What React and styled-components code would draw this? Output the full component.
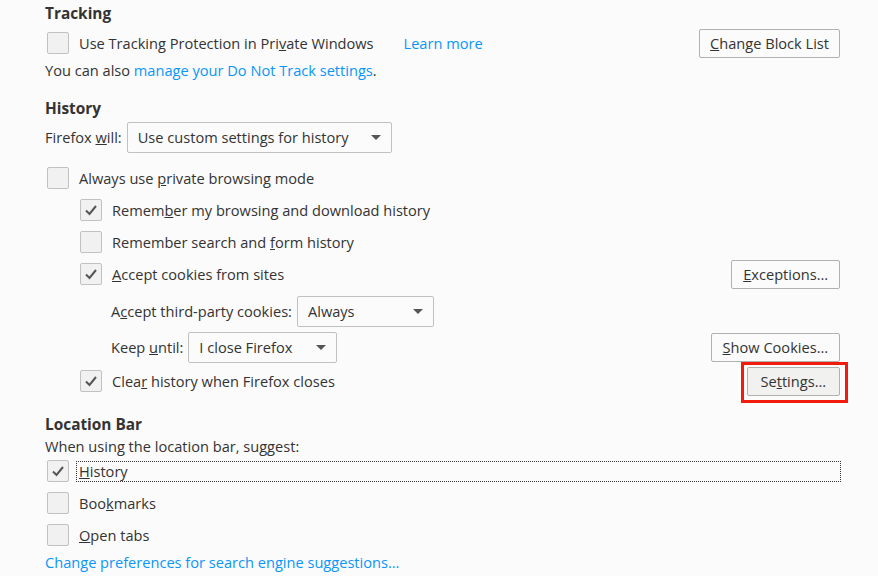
import styled, { createGlobalStyle } from "styled-components";

const GlobalStyle = createGlobalStyle`
  html, body {
    margin: 0;
    padding: 0;
    background: #fbfbfb;
  }
  body {
    font-family: "Open Sans", "Liberation Sans", sans-serif;
    font-size: 14.6px;
    color: #333;
  }
`;

const Page = styled.div`
  width: 878px;
  height: 576px;
  box-sizing: border-box;
  padding: 0 38px 0 45px;
  overflow: hidden;
`;

const Heading = styled.h2`
  margin: ${(p) => p.$top || 0}px 0 0;
  height: ${(p) => p.$h || 26}px;
  line-height: ${(p) => p.$h || 26}px;
  font-size: 15.4px;
  font-weight: 700;
  color: #333;
`;

const Line = styled.div`
  height: ${(p) => p.$h || 24}px;
  line-height: ${(p) => p.$h || 24}px;
  white-space: nowrap;
`;

const Row = styled.div`
  display: flex;
  align-items: center;
  height: ${(p) => p.$h || 32}px;
  margin-top: ${(p) => p.$top || 0}px;
  padding-left: ${(p) => p.$indent || 0}px;
  white-space: nowrap;
`;

const Box = styled.span`
  flex: none;
  width: 22px;
  height: 22px;
  box-sizing: border-box;
  margin-left: 2px;
  border: 1px solid #c1c1c1;
  border-radius: 2px;
  background: #f1f1f1;
  display: flex;
  align-items: center;
  justify-content: center;
`;

const Label = styled.span`
  margin-left: 9px;
  padding: 0 1px;
  line-height: 19px;
  ${(p) => p.$focus && `
    flex: 1;
    margin-left: 8px;
    padding-left: 2px;
    outline: 1px dotted #333;
    outline-offset: 0;
  `}
`;

const Link = styled.a`
  color: #0996f8;
  text-decoration: none;
  margin-left: ${(p) => p.$gap || 0}px;
`;

const Button = styled.button`
  position: relative;
  margin-left: auto;
  height: 29px;
  padding: 0 ${(p) => p.$pad || 11}px;
  font-family: inherit;
  font-size: 14.6px;
  color: #333;
  background: ${(p) => (p.$marked ? "#f1f1f0" : "#fbfbfb")};
  border: 1px solid #b1b1b1;
  border-radius: 2px;
  ${(p) => p.$marked && `
    &::after {
      content: "";
      position: absolute;
      top: -6px;
      bottom: -8px;
      left: -7px;
      right: -9px;
      border: 3px solid #f21c0c;
    }
  `}
`;

const Caption = styled.span`
  margin-right: 5px;
`;

const Select = styled.div`
  display: flex;
  align-items: center;
  width: ${(p) => p.$w}px;
  height: 31px;
  box-sizing: border-box;
  padding: 0 10px;
  border: 1px solid #c1c1c1;
  border-radius: 2px;
  background: #fbfbfb;
  color: #333;
`;

const SelectText = styled.span`
  flex: 1;
`;

const Check = () => (
  <svg width="14" height="12" viewBox="0 0 14 12">
    <path d="M2 6.5 L5.5 10 L12 2" fill="none" stroke="#555" strokeWidth="2" />
  </svg>
);

const Arrow = () => (
  <svg width="10" height="5" viewBox="0 0 10 5">
    <path d="M0 0 H10 L5 5 Z" fill="#555" />
  </svg>
);

function CheckRow({ checked, indent, focus, top, children, right }) {
  return (
    <Row $indent={indent} $top={top}>
      <Box>{checked && <Check />}</Box>
      <Label $focus={focus}>{children}</Label>
      {right}
    </Row>
  );
}

function Dropdown({ width, value }) {
  return (
    <Select $w={width}>
      <SelectText>{value}</SelectText>
      <Arrow />
    </Select>
  );
}

export default function App() {
  return (
    <Page>
      <GlobalStyle />
      <Heading $h={28}>Tracking</Heading>
      <Row $h={30}>
        <Box />
        <Label>Use Tracking Protection in Pri<u>v</u>ate Windows</Label>
        <Link $gap={29} href="#">Learn more</Link>
        <Button $pad={10}><u>C</u>hange Block List</Button>
      </Row>
      <Line>
        You can also <Link href="#">manage your Do Not Track settings</Link>.
      </Line>

      <Heading $top={14}>History</Heading>
      <Row $h={30}>
        <Caption>Firefox <u>w</u>ill:</Caption>
        <Dropdown width={265} value="Use custom settings for history" />
      </Row>
      <CheckRow top={10}>Always use <u>p</u>rivate browsing mode</CheckRow>
      <CheckRow checked indent={33}>Remem<u>b</u>er my browsing and download history</CheckRow>
      <CheckRow indent={33}>Remember search and <u>f</u>orm history</CheckRow>
      <CheckRow
        checked
        indent={33}
        right={<Button><u>E</u>xceptions…</Button>}
      >
        <u>A</u>ccept cookies from sites
      </CheckRow>
      <Row $h={36} $top={3} $indent={66}>
        <Caption>A<u>c</u>cept third-party cookies:</Caption>
        <Dropdown width={137} value="Always" />
      </Row>
      <Row $h={36} $indent={66}>
        <Caption>Keep <u>u</u>ntil:</Caption>
        <Dropdown width={149} value="I close Firefox" />
        <Button><u>S</u>how Cookies…</Button>
      </Row>
      <CheckRow
        checked
        indent={33}
        right={<Button $marked $pad={13}>Se<u>t</u>tings…</Button>}
      >
        Clea<u>r</u> history when Firefox closes
      </CheckRow>

      <Heading $top={16} $h={24}>Location Bar</Heading>
      <Line $h={18}>When using the location bar, suggest:</Line>
      <CheckRow checked focus>
        <u>H</u>istory
      </CheckRow>
      <CheckRow>Boo<u>k</u>marks</CheckRow>
      <CheckRow><u>O</u>pen tabs</CheckRow>
      <Line $h={22}>
        <Link href="#">Change preferences for search engine suggestions…</Link>
      </Line>
    </Page>
  );
}
